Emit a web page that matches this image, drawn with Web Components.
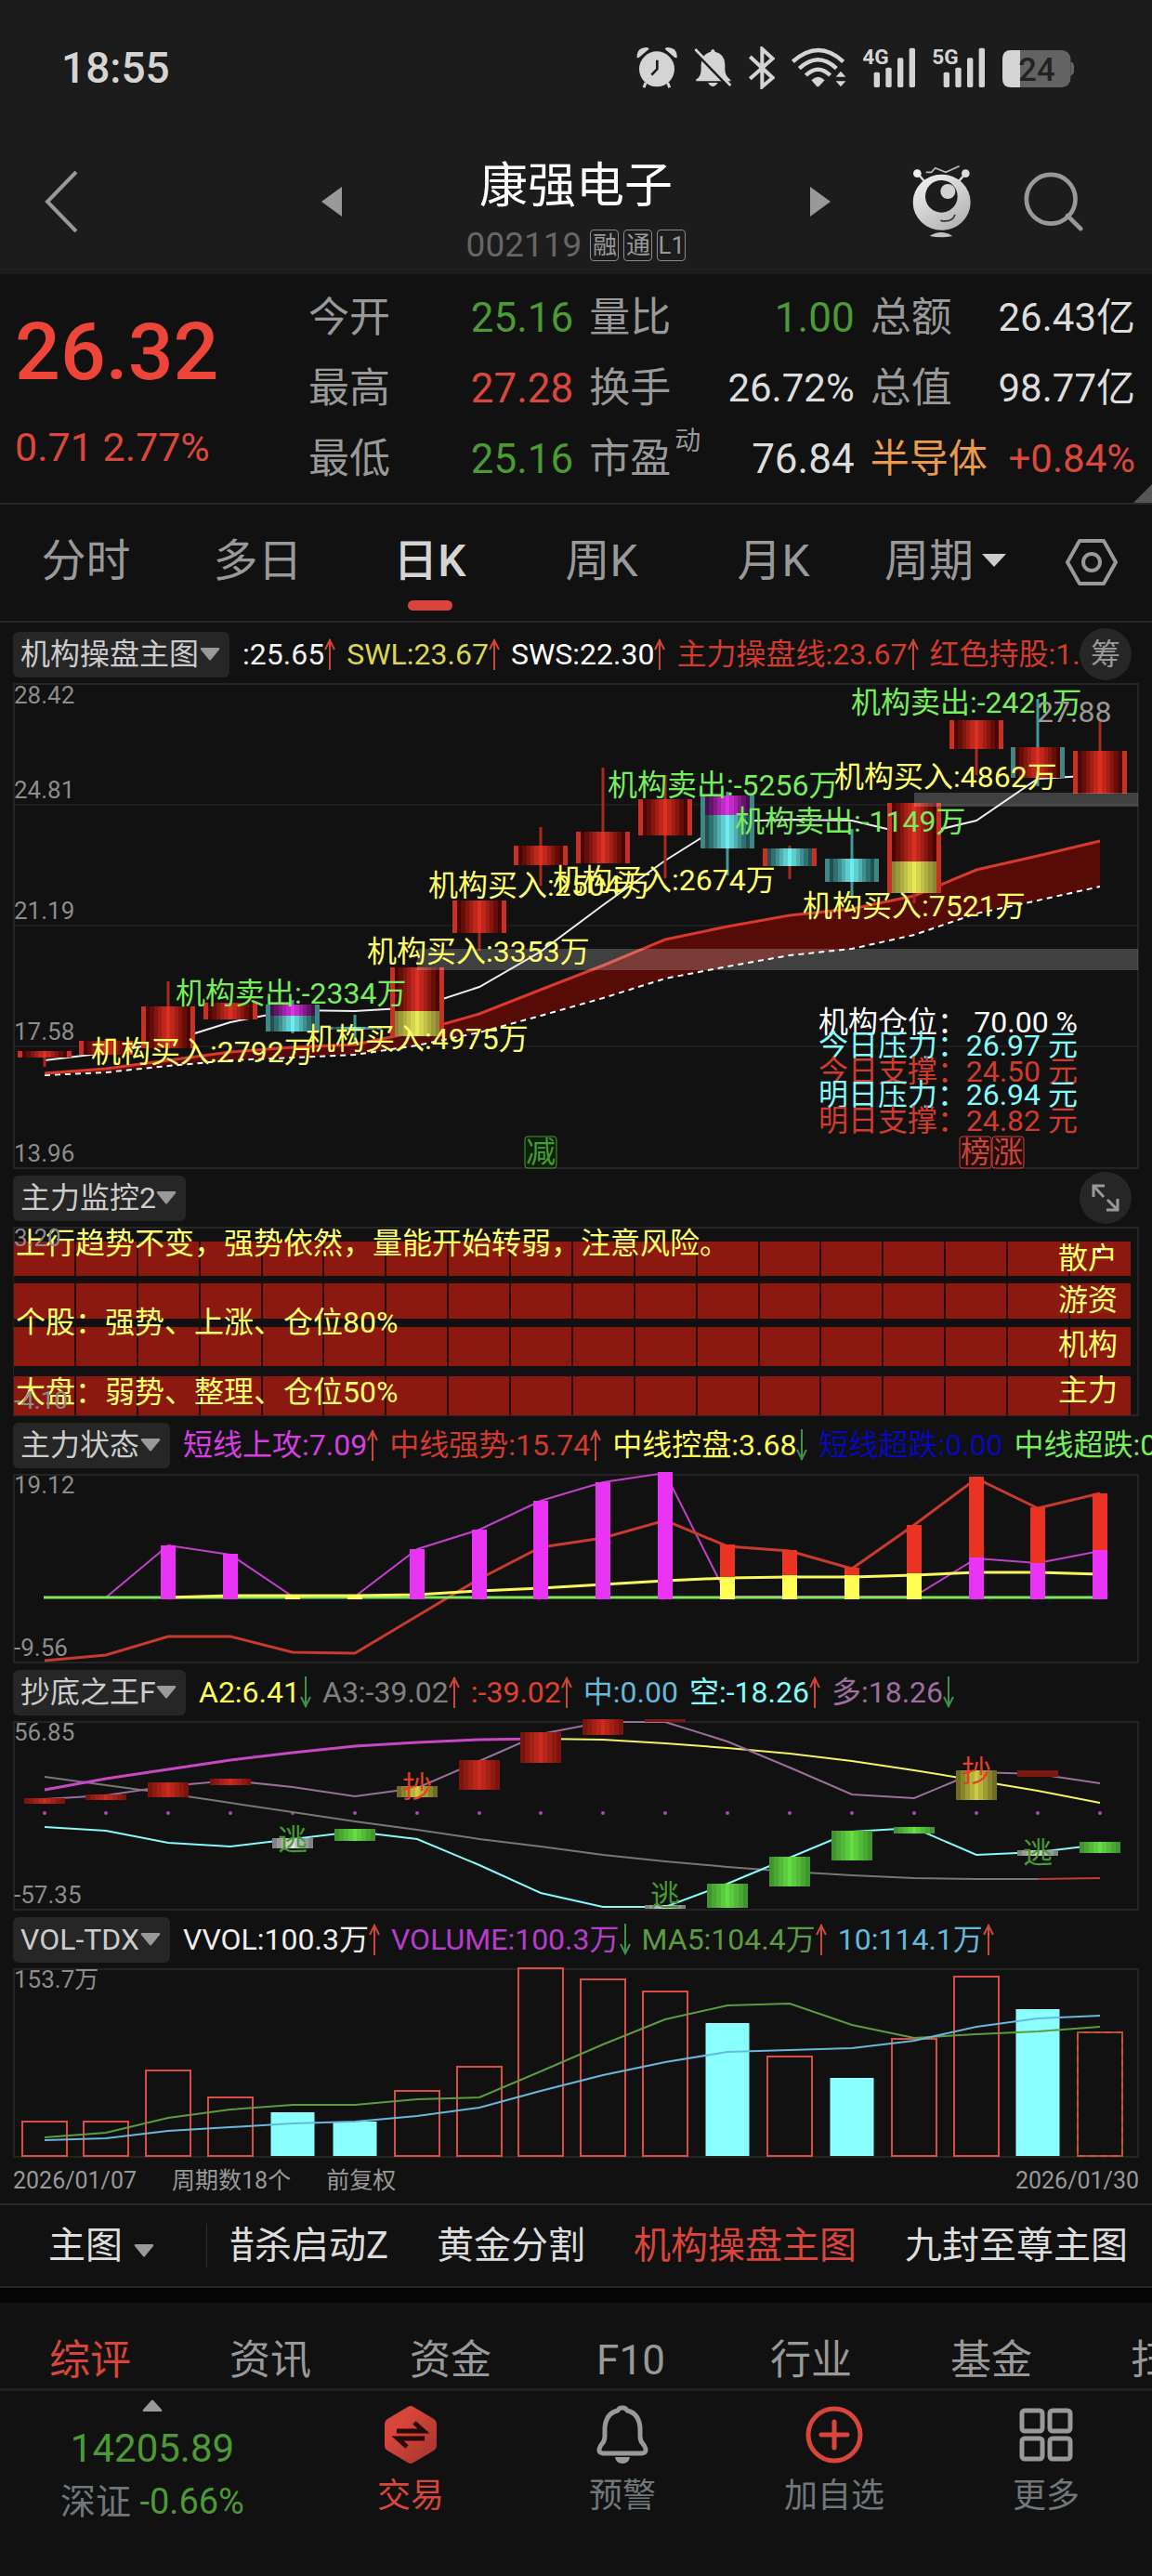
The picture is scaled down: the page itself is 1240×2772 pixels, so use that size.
<!DOCTYPE html>
<html lang="zh-CN">
<head>
<meta charset="utf-8">
<meta name="viewport" content="width=device-width, initial-scale=1">
<title>康强电子 002119</title>
<style>
  body {
    margin: 0;
    background: #111;
    color: #ddd;
    font-family: Roboto, "Noto Sans CJK SC", sans-serif;
    overflow-x: hidden;
  }
  .charts {
    padding-top: 3px;
  }
</style>
</head>
<body>
<status-bar time="18:55"></status-bar>
<stock-header name="康强电子" code="002119"></stock-header>
<quote-board></quote-board>
<period-tabs></period-tabs>

<main class="charts">
  <indicator-panel name="机构操盘主图">
    <trend-value color="#f2f2f2" dir="up">:25.65</trend-value>
    <trend-value color="#d8d850" dir="up">SWL:23.67</trend-value>
    <trend-value color="#ffffff" dir="up">SWS:22.30</trend-value>
    <trend-value color="#d23a2b" dir="up">主力操盘线:23.67</trend-value>
    <trend-value color="#d23a2b">红色持股:1.</trend-value>
    <round-button slot="action" label="筹码分布">筹</round-button>
    <price-chart slot="chart"></price-chart>
  </indicator-panel>

  <indicator-panel name="主力监控2">
    <round-button slot="action" label="展开">
      <svg width="30" height="30" viewBox="0 0 30 30" fill="none" stroke="#999" stroke-width="3"><path d="M2 14V2h12M2 2l11 12M28 16v12H16M28 28L17 17"/></svg>
    </round-button>
    <monitor-chart slot="chart"></monitor-chart>
  </indicator-panel>

  <indicator-panel name="主力状态">
    <trend-value color="#d63ee0" dir="up">短线上攻:7.09</trend-value>
    <trend-value color="#d23a2b" dir="up">中线强势:15.74</trend-value>
    <trend-value color="#ffff54" dir="down">中线控盘:3.68</trend-value>
    <trend-value color="#0808b8">短线超跌:0.00</trend-value>
    <trend-value color="#76ee5c">中线超跌:0.00</trend-value>
    <state-chart slot="chart"></state-chart>
  </indicator-panel>

  <indicator-panel name="抄底之王F">
    <trend-value color="#ffff54" dir="down">A2:6.41</trend-value>
    <trend-value color="#808080" dir="up">A3:-39.02</trend-value>
    <trend-value color="#e0402f" dir="up">:-39.02</trend-value>
    <trend-value color="#66b8dc">中:0.00</trend-value>
    <trend-value color="#84fbfb" dir="up">空:-18.26</trend-value>
    <trend-value color="#9c6f9f" dir="down">多:18.26</trend-value>
    <bottom-chart slot="chart"></bottom-chart>
  </indicator-panel>

  <indicator-panel name="VOL-TDX">
    <trend-value color="#eeeeee" dir="up">VVOL:100.3万</trend-value>
    <trend-value color="#b83ccb" dir="down">VOLUME:100.3万</trend-value>
    <trend-value color="#5d9b40" dir="up">MA5:104.4万</trend-value>
    <trend-value color="#66b8dc" dir="up">10:114.1万</trend-value>
    <volume-chart slot="chart"></volume-chart>
  </indicator-panel>
</main>

<chart-footer></chart-footer>
<formula-bar></formula-bar>
<info-tabs></info-tabs>
<bottom-nav></bottom-nav>

<script>
const CARET = `<svg class="caret" width="22" height="14" viewBox="0 0 22 14"><path d="M2 0h18q2 0 1 2L12 13q-1 1-2 0L1 2q-1-2 1-2z" fill="#999"/></svg>`;

const RESET = `
  button, select {
    margin: 0;
    padding: 0;
    border: 0;
    background: none;
    color: inherit;
    font: inherit;
    appearance: none;
    cursor: pointer;
  }
  a { color: inherit; text-decoration: none; }
  svg { display: block; }
`;

class BaseElement extends HTMLElement {
  constructor() {
    super();
    this.attachShadow({ mode: "open" });
  }

  connectedCallback() {
    this.shadowRoot.innerHTML = `<style>${RESET}${this.styles()}</style>${this.markup()}`;
  }

  styles() {
    return "";
  }
}

class StatusBar extends BaseElement {
  styles() {
    return `
      :host {
        display: flex;
        align-items: center;
        height: 146px;
        padding: 0 84px 0 66px;
        background: #1c1c1c;
        color: #d4d4d4;
      }
      time { flex: 1; font-size: 46px; font-weight: 500; }
      .icons { display: flex; gap: 18px; }
      svg { height: 46px; fill: #d4d4d4; }
    `;
  }

  signal(name) {
    return `
      <svg width="57" viewBox="774 33 171 138">
        <text x="772" y="91" font-size="68" font-weight="700">${name}</text>
        <rect x="809" y="116" width="19" height="49" rx="5"/>
        <rect x="847" y="101" width="19" height="64" rx="5"/>
        <rect x="885" y="70" width="19" height="95" rx="5"/>
        <rect x="923" y="38" width="19" height="127" rx="5"/>
      </svg>`;
  }

  markup() {
    return `
      <time>${this.getAttribute("time")}</time>
      <div class="icons">
        <svg width="44" viewBox="50 33 132 138">
          <path d="M52 70q-2-34 32-34q8 2 6 6L58 69zM181 70q2-34-32-34q-8 2-6 6l31 27z"/>
          <path d="M80 150l-6 16M151 150l6 16" stroke="#d4d4d4" stroke-width="9"/>
          <circle cx="116" cy="106" r="57"/>
          <path d="M117 77v29l-18 19" fill="none" stroke="#1c1c1c" stroke-width="8"/>
        </svg>
        <svg width="41" viewBox="236 33 123 138">
          <path d="M243 145v-6q16-8 16-32V90q1-32 31-40q1-8 7-8q6 0 7 8q32 8 32 40v17q0 20 17 33l2 5zM281 150h32q-16 24-32 0z"/>
          <path d="M233 44l115 118" stroke="#1c1c1c" stroke-width="10"/>
          <path d="M240 42l114 117" stroke="#d4d4d4" stroke-width="8"/>
        </svg>
        <svg width="28" viewBox="408 33 84 138">
          <path d="M412 66l73 68l-34 29V41l34 31l-73 65" fill="none" stroke="#d4d4d4" stroke-width="12"/>
        </svg>
        <svg width="59" viewBox="549 33 177 138">
          <g fill="none" stroke="#d4d4d4" stroke-width="13">
            <path d="M553 82q83-74 163 0M574 104q61-56 120 0M595 126q40-38 79 0"/>
          </g>
          <path d="M613 142q22-22 43 0l-18 19q-4 4-8 0zM692 131l16-18l16 18zM692 145l16 18l16-18z"/>
        </svg>
        ${this.signal("4G")}
        ${this.signal("5G")}
        <svg width="77" viewBox="1227 33 231 138">
          <rect x="1227" y="45" width="220" height="120" rx="28" fill="#636363"/>
          <path d="M1447 82q11 4 11 14v18q0 10-11 14z" fill="#636363"/>
          <path d="M1284 45h-29q-28 0-28 28v64q0 28 28 28h29z"/>
          <text x="1279" y="144" font-size="104" font-weight="500" fill="#222">24</text>
        </svg>
      </div>`;
  }
}

class StockHeader extends BaseElement {
  styles() {
    return `
      :host {
        display: grid;
        grid-template-columns: 1fr 548px 1fr;
        align-items: center;
        height: 141px;
        padding-bottom: 8px;
        background: #1c1c1c;
      }
      .back { padding-left: 48px; }
      .center { display: flex; justify-content: space-between; align-items: center; }
      .title { padding-top: 16px; text-align: center; }
      h1 { margin: 0 0 14px; color: #fff; font-size: 52px; font-weight: 400; line-height: 64px; }
      p { display: flex; gap: 5px; margin: 0; color: #666; font-size: 37px; line-height: 34px; }
      p b { margin-right: 4px; font-weight: 400; }
      p span {
        box-sizing: border-box;
        width: 31px;
        height: 34px;
        border: 1px solid #8a8a8a;
        border-radius: 4px;
        color: #999;
        font-size: 26px;
        line-height: 32px;
        display: flex;
        justify-content: center;
      }
      .tools { display: flex; justify-content: flex-end; align-items: center; gap: 54px; padding-right: 74px; }
    `;
  }

  markup() {
    return `
      <button class="back" aria-label="返回">
        <svg width="36" height="66" viewBox="0 0 36 66" fill="none" stroke="#999" stroke-width="4"><path d="M34 1L3 33l31 32"/></svg>
      </button>
      <div class="center">
        <button aria-label="上一只"><svg width="22" height="32" viewBox="0 0 22 32"><path d="M22 0v32L0 16z" fill="#999"/></svg></button>
        <div class="title">
          <h1>${this.getAttribute("name")}</h1>
          <p><b>${this.getAttribute("code")}</b><span>融</span><span>通</span><span>L1</span></p>
        </div>
        <button aria-label="下一只"><svg width="22" height="32" viewBox="0 0 22 32"><path d="M0 0v32l22-16z" fill="#999"/></svg></button>
      </div>
      <div class="tools">
        <button aria-label="助手">
          <svg width="68" height="80" viewBox="60 50 204 240">
            <defs><linearGradient id="skin" x1="0" y1="0" x2=".7" y2="1"><stop offset="0" stop-color="#f4f4f4"/><stop offset="1" stop-color="#b4b4b4"/></linearGradient></defs>
            <path d="M110 75h18l12-14l34 14l44-20" fill="none" stroke="#bbb" stroke-width="5"/>
            <path d="M84 80l24 28M237 80l-24 28" stroke="#ddd" stroke-width="7"/>
            <circle cx="82" cy="79" r="13" fill="#eee"/>
            <circle cx="238" cy="79" r="13" fill="#ddd"/>
            <ellipse cx="161" cy="172" rx="93" ry="90" fill="url(#skin)"/>
            <circle cx="160" cy="153" r="52" fill="#1c1c1c"/>
            <circle cx="181" cy="137" r="24" fill="#d2d2d2"/>
            <path d="M157 231q37 8 47-19" fill="none" stroke="#333" stroke-width="5"/>
            <path d="M122 281q38-24 74 0q-37 8-74 0z" fill="#c4c4c4"/>
          </svg>
        </button>
        <button aria-label="搜索">
          <svg width="64" height="64" viewBox="0 0 68 68" fill="none" stroke="#999" stroke-width="5"><circle cx="31" cy="31" r="28"/><path d="M50 50l15 15" stroke-linecap="round"/></svg>
        </button>
      </div>`;
  }
}

class QuoteBoard extends BaseElement {
  styles() {
    return `
      :host {
        position: relative;
        display: grid;
        grid-template-columns: 299px 1fr 1fr 1fr;
        column-gap: 17px;
        padding: 9px 18px 9px 16px;
        border-bottom: 2px solid #262626;
        white-space: nowrap;
      }
      .price { padding-top: 25px; color: #ee4539; }
      .price strong { display: block; font-size: 86px; font-weight: 500; line-height: 100px; }
      .price span { display: block; margin-top: 27px; color: #dc473c; font-size: 43px; line-height: 50px; }
      dl { margin: 0; }
      dl div { display: flex; justify-content: space-between; height: 76px; line-height: 76px; }
      dt { display: flex; color: #999; font-size: 44px; }
      dd { margin: 0; color: #ddd; font-size: 44px; }
      .small { font-size: 42px; }
      .hot { color: #ea9a48; }
      .up { color: #dc473c; }
      .down { color: #4b9a34; }
      sup { margin-left: 4px; font-size: 28px; line-height: 38px; }
      .corner { position: absolute; right: 0; bottom: 0; }
    `;
  }

  column(rows) {
    return `<dl>${rows.map(([label, value, cls = "", labelCls = ""]) =>
      `<div><dt class="${labelCls}">${label}</dt><dd class="${cls}">${value}</dd></div>`).join("")}</dl>`;
  }

  markup() {
    return `
      <div class="price"><strong>26.32</strong><span>0.71 2.77%</span></div>
      ${this.column([["今开", "25.16", "down"], ["最高", "27.28", "up"], ["最低", "25.16", "down"]])}
      ${this.column([["量比", "1.00", "down"], ["换手", "26.72%", "small"], ["市盈<sup>动</sup>", "76.84"]])}
      ${this.column([["总额", "26.43亿", "small"], ["总值", "98.77亿", "small"], ["半导体", "+0.84%", "small up", "small hot"]])}
      <svg class="corner" width="20" height="20"><path d="M20 0v20H0z" fill="#555"/></svg>`;
  }
}

class PeriodTabs extends BaseElement {
  styles() {
    return `
      :host {
        display: grid;
        grid-template-columns: repeat(6, 185fr) 130fr;
        height: 125px;
        border-bottom: 2px solid #262626;
        color: #999;
        font-size: 48px;
      }
      button, label { display: flex; flex-direction: column; align-items: center; padding-top: 24px; line-height: 74px; }
      button::after { content: ""; width: 48px; height: 11px; margin-top: 5px; border-radius: 6px; }
      button[aria-selected="true"] { color: #d4d4d4; font-weight: 500; }
      button[aria-selected="true"]::after { background: #d9453a; }
      label { flex-direction: row; align-items: flex-start; justify-content: center; gap: 8px; }
      select { height: 74px; line-height: 74px; }
      label svg { margin-top: 29px; }
      .gear { align-items: center; padding-top: 37px; }
      .gear::after { display: none; }
    `;
  }

  markup() {
    const tabs = ["分时", "多日", "日K", "周K", "月K"];
    return `
      ${tabs.map(t => `<button role="tab" aria-selected="${t === "日K"}">${t}</button>`).join("")}
      <label><select aria-label="周期"><option>周期</option></select>
        <svg width="26" height="14"><path d="M0 0h26L13 14z" fill="#ccc"/></svg></label>
      <button class="gear" aria-label="设置">
        <svg width="56" height="50" viewBox="0 0 56 50" fill="none" stroke="#999" stroke-width="4" stroke-linejoin="round"><path d="M15 2h26l13 23l-13 23H15L2 25z"/><circle cx="28" cy="25" r="9"/></svg>
      </button>`;
  }
}

class TrendValue extends BaseElement {
  styles() {
    return `
      :host { display: flex; flex: none; align-items: center; color: ${this.getAttribute("color")}; }
    `;
  }

  markup() {
    const dir = this.getAttribute("dir");
    const arrow = {
      up: `<svg width="12" height="34" fill="none" stroke="#cf4638" stroke-width="2"><path d="M6 34V1M1 12L6 2l5 10"/></svg>`,
      down: `<svg width="12" height="34" fill="none" stroke="#3f9148" stroke-width="2"><path d="M6 0v33M1 22l5 10l5-10"/></svg>`
    };
    return `<slot></slot>${arrow[dir] || ""}`;
  }
}

class RoundButton extends BaseElement {
  styles() {
    return `
      :host { display: block; }
      button {
        display: grid;
        place-items: center;
        width: 56px;
        height: 56px;
        border-radius: 50%;
        background: #262626;
        color: #999;
        font-size: 32px;
        line-height: 32px;
      }
    `;
  }

  markup() {
    return `<button aria-label="${this.getAttribute("label")}"><slot></slot></button>`;
  }
}

class IndicatorPanel extends BaseElement {
  styles() {
    return `
      :host { display: block; padding: 3px 0 0 14px; }
      header { display: flex; align-items: center; height: 56px; margin-bottom: 3px; font-size: 32px; }
      label {
        display: flex;
        flex: none;
        align-items: center;
        height: 49px;
        padding: 0 10px 0 8px;
        border-radius: 6px;
        background: #262626;
        color: #ccc;
      }
      select { line-height: 48px; }
      .legend { display: flex; flex: 1; gap: 12px; min-width: 0; padding-left: 14px; overflow: hidden; white-space: nowrap; line-height: 48px; }
      ::slotted([slot="action"]) { margin-right: 22px; }
      ::slotted([slot="chart"]) { margin-right: 14px; }
    `;
  }

  markup() {
    const name = this.getAttribute("name");
    return `
      <header>
        <label><select aria-label="指标"><option>${name}</option></select>${CARET}</label>
        <div class="legend"><slot></slot></div>
        <slot name="action"></slot>
      </header>
      <slot name="chart"></slot>`;
  }
}

// x of the n-th trading day, 18 days per screen
const dayX = i => Math.round(33.5 + 66.87 * i);

class ChartBase extends BaseElement {
  styles() {
    return `
      :host { display: block; }
      svg { width: 100%; height: auto; overflow: visible; }
      .axis { fill: #8c8c8c; font-size: 26px; }
      .note { font-size: 32px; }
      .buy { fill: #ffff6a; }
      .sell { fill: #76ee5c; }
      .line { fill: none; stroke-width: 2; }
    `;
  }

  // banded gradient, dark at both sides and bright in the middle
  bands(id, dark, bright, steps = 6) {
    const n = steps * 2 - 1;
    let stops = "";
    for (let i = 0; i < n; i++) {
      const t = (i < steps ? i : n - 1 - i) / (steps - 1);
      const c = dark.map((d, k) => Math.round(d + (bright[k] - d) * t));
      const color = `rgb(${c.join(",")})`;
      stops += `<stop offset="${i / n}" stop-color="${color}"/><stop offset="${(i + 1) / n}" stop-color="${color}"/>`;
    }
    return `<linearGradient id="${id}">${stops}</linearGradient>`;
  }

  points(values, from = 0) {
    return values.map((y, i) => `${dayX(i + from)},${y}`).join(" ");
  }

  line(values, color, from = 0, extra = "") {
    return `<polyline class="line" points="${this.points(values, from)}" stroke="${color}" ${extra}/>`;
  }

  bar(i, top, bottom, width, fill) {
    return `<rect x="${dayX(i) - width / 2}" y="${top}" width="${width}" height="${bottom - top}" fill="${fill}"/>`;
  }

  text(x, y, str, cls, extra = "") {
    return `<text x="${x}" y="${y}" class="${cls}" ${extra}>${str}</text>`;
  }

  frame(height, grid, body) {
    return `
      <svg viewBox="0 0 1212 ${height}">
        <rect x="1" y="1" width="1210" height="${height - 2}" fill="none" stroke="#242424" stroke-width="2"/>
        ${grid.map(y => `<path d="M0 ${y}H1212" stroke="#2b2b2b" stroke-width="1"/>`).join("")}
        ${body}
      </svg>`;
  }
}

class PriceChart extends ChartBase {
  // body: [top, bottom, wick top, wick bottom, side colour, fill, split y, split fill]
  get candles() {
    return [
      [396, 403, 396, 413, "r", "red"],
      [385, 400, 383, 400, "r", "red"],
      [348, 393, 321, 393, "r", "red"],
      [344, 362, 344, 362, "r", "red"],
      [346, 375, 341, 377, "c", "magenta", 358, "cyan"],
      [370, 373, 357, 388, "c", "cyan"],
      [306, 380, 306, 380, "r", "red", 353, "yellow"],
      [234, 269, 234, 288, "r", "red"],
      [175, 196, 155, 218, "r", "red"],
      [160, 194, 91, 194, "r", "red"],
      [125, 164, 99, 210, "r", "red"],
      [121, 178, 117, 207, "c", "magenta", 142, "cyan"],
      [178, 197, 175, 211, "r", "cyan"],
      [189, 214, 157, 232, "c", "cyan"],
      [129, 226, 129, 237, "r", "red", 192, "yellow"],
      [40, 71, 40, 99, "r", "red"],
      [69, 102, 17, 111, "c", "red"],
      [73, 119, 38, 119, "r", "red"]
    ];
  }

  candle([top, bottom, high, low, side, fill, split, fill2], i) {
    const edge = side === "r" ? "#c93024" : "#3f8787";
    const wick = side === "r" ? "#a8281e" : "#3f9a9a";
    const mid = split || bottom;
    return `
      <path d="M${dayX(i)} ${high}V${low}" stroke="${wick}" stroke-width="3"/>
      ${this.bar(i, top, bottom, 58, edge)}
      ${this.bar(i, top, mid, 48, `url(#${fill})`)}
      ${split ? this.bar(i, mid, bottom, 48, `url(#${fill2})`) : ""}`;
  }

  tag(x, str, color, bg) {
    return `<rect x="${x}" y="488" width="34" height="34" rx="3" fill="${bg}" stroke="${color}"/>
      ${this.text(x + 17, 516, str, "note", `fill="${color}" text-anchor="middle"`)}`;
  }

  markup() {
    const trend = [420, 415, 406, 397, 392, 389, 375, 356, 330, 304, 276, 262, 250, 243, 229, 201, 186, 170];
    const base = [422, 419, 412, 406, 403, 400, 390, 376, 358, 339, 318, 305, 293, 286, 271, 248, 234, 219];
    const avg = [406, 398, 386, 365, 352, 353, 349, 327, 289, 239, 191, 149, 147, 148, 164, 148, 103, 99];
    const area = this.points(trend) + " " + this.points(base).split(" ").reverse().join(" ");
    const notes = [
      [175, 345, "机构卖出:-2334万", "sell"],
      [84, 408, "机构买入:2792万", "buy"],
      [315, 394, "机构买入:4975万", "buy"],
      [381, 300, "机构买入:3353万", "buy"],
      [447, 229, "机构买入:2504万", "buy"],
      [581, 223, "机构买入:2674万", "buy"],
      [640, 121, "机构卖出:-5256万", "sell"],
      [777, 160, "机构卖出:-1149万", "sell"],
      [884, 112, "机构买入:4862万", "buy"],
      [850, 251, "机构买入:7521万", "buy"],
      [902, 32, "机构卖出:-2421万", "sell"]
    ];
    const levels = [
      [376, "机构仓位：", "70.00 %", "#fff"],
      [401, "今日压力：", "26.97 元", "#84fbfb"],
      [429, "今日支撑：", "24.50 元", "#d23a2b"],
      [454, "明日压力：", "26.94 元", "#84fbfb"],
      [482, "明日支撑：", "24.82 元", "#d23a2b"]
    ];
    return this.frame(523, [131, 261, 391], `
      <defs>
        ${this.bands("red", [72, 4, 0], [219, 48, 34])}
        ${this.bands("cyan", [34, 80, 80], [110, 238, 238])}
        ${this.bands("magenta", [70, 14, 74], [222, 50, 232])}
        ${this.bands("yellow", [138, 134, 52], [232, 232, 84])}
      </defs>
      <polygon points="${area}" fill="#570b06"/>
      ${this.line(base, "#fff", 0, 'stroke-dasharray="6 5"')}
      ${this.line(trend, "#d8392b", 0, 'style="stroke-width:3"')}
      ${this.line(avg, "#eee")}
      ${this.candles.map((c, i) => this.candle(c, i)).join("")}
      <rect x="435" y="286" width="776" height="23" fill="#fff" fill-opacity=".2"/>
      <rect x="970" y="118" width="241" height="15" fill="#fff" fill-opacity=".2"/>
      ${notes.map(([x, y, s, cls]) => this.text(x, y, s, `note ${cls}`)).join("")}
      ${levels.map(([y, label, value, color]) =>
        this.text(867, y, label, "note", `fill="${color}"`) +
        this.text(1146, y, value, "note", `fill="${color}" text-anchor="end"`)).join("")}
      ${this.text(1102, 42, "27.88", "note", 'fill="#999"')}
      ${this.tag(551, "减", "#479a33", "#0c200a")}
      ${this.tag(1019, "榜", "#c8453a", "#240c0a")}
      ${this.tag(1054, "涨", "#c8453a", "#240c0a")}
      ${[[22, "28.42"], [124, "24.81"], [254, "21.19"], [384, "17.58"], [515, "13.96"]]
        .map(([y, s]) => this.text(1, y, s, "axis")).join("")}
    `);
  }
}

class MonitorChart extends ChartBase {
  markup() {
    const rows = [[16, 53], [61, 99], [108, 150], [161, 203]];
    let cells = rows.map(([a, b]) => `<rect x="1" y="${a}" width="1202" height="${b - a}" fill="#8b1910"/>`).join("");
    for (let i = 0; i < 17; i++) {
      cells += `<path d="M${dayX(i + .5)} 16V203" stroke="#2a0c0a" stroke-width="2"/>`;
    }
    const gaps = [[53, 61], [99, 108], [150, 161]]
      .map(([a, b]) => `<rect x="1" y="${a}" width="1202" height="${b - a}" fill="#111"/>`).join("");
    return this.frame(204, [], `
      ${cells}${gaps}
      ${this.text(3, 29, "上行趋势不变，强势依然，量能开始转弱，注意风险。", "note buy")}
      ${this.text(3, 114, "个股：强势、上涨、仓位80%", "note buy")}
      ${this.text(3, 189, "大盘：弱势、整理、仓位50%", "note buy")}
      ${[[45, "散户"], [90, "游资"], [138, "机构"], [187, "主力"]].map(([y, s]) => this.text(1125, y, s, "note buy")).join("")}
      <rect x="1167" y="24" width="4" height="4" fill="#fff"/>
      ${this.text(1, 21, "3.20", "axis")}
      ${this.text(1, 196, "-4.10", "axis")}
    `);
  }
}

class StateChart extends ChartBase {
  markup() {
    const magenta = "#ea34f5", red = "#ea3323", yellow = "#ffff54";
    const bars = [
      [2, 77, magenta], [3, 86, magenta], [4, 130, yellow], [5, 130, yellow],
      [6, 81, magenta], [7, 60, magenta], [8, 29, magenta], [9, 9, magenta], [10, -2, magenta],
      [11, 76, red], [12, 82, red], [13, 101, red], [14, 55, red], [15, 3, red], [16, 36, red], [17, 21, red],
      [11, 111, yellow], [12, 109, yellow], [13, 109, yellow], [14, 107, yellow],
      [15, 90, magenta], [16, 96, magenta], [17, 82, magenta]
    ];
    return this.frame(204, [], `
      ${this.line([133, 77, 87, 132, 132, 81, 60, 29, 9, -1, 132, 132, 132, 132, 91, 96, 83], "#c040cc", 1)}
      ${this.line([201, 195, 175, 175, 192, 193, 153, 113, 79, 69, 50, 78, 83, 102, 55, 5, 37, 21], "#c93a2c", 0, 'style="stroke-width:3"')}
      <path d="M33 133H1170" stroke="#7ee858" stroke-width="3"/>
      ${this.line([133, 131, 131, 131, 130, 126, 123, 119, 115, 112, 111, 111, 109, 106, 106, 108], "#f8f85a", 2, 'style="stroke-width:3"')}
      ${bars.map(([i, top, color]) => this.bar(i, top, 135, 16, color)).join("")}
      ${this.text(1, 21, "19.12", "axis")}
      ${this.text(1, 196, "-9.56", "axis")}
    `);
  }
}

class BottomChart extends ChartBase {
  markup() {
    const bars = [
      [0, 83, 89, "red"], [1, 79, 85, "red"], [2, 66, 82, "red"], [3, 62, 69, "red"],
      [4, 126, 137, "grey"], [5, 116, 129, "green"], [6, 70, 82, "yellow"], [7, 42, 74, "red"],
      [8, 12, 45, "red"], [9, -2, 15, "red"], [10, 198, 202, "grey"], [11, 175, 201, "green"],
      [12, 146, 178, "green"], [13, 118, 150, "green"], [14, 114, 121, "green"],
      [15, 53, 85, "yellow"], [16, 139, 145, "grey"], [17, 130, 142, "green"]
    ];
    let dots = "";
    for (let i = 0; i < 18; i++) dots += `<circle cx="${dayX(i)}" cy="99" r="2" fill="#b440c0"/>`;
    const mark = (i, y, s, color) => this.text(dayX(i), y, s, "note", `fill="${color}" text-anchor="middle"`);
    return this.frame(204, [], `
      <defs>
        ${this.bands("red", [122, 20, 12], [204, 44, 32], 5)}
        ${this.bands("green", [64, 150, 44], [100, 222, 68], 5)}
        ${this.bands("yellow", [112, 108, 36], [204, 204, 68], 5)}
        ${this.bands("grey", [130, 130, 130], [225, 225, 225], 5)}
      </defs>
      ${dots}
      ${this.line([60, 69, 78, 88, 98, 108, 117, 127, 135, 144, 151, 157, 162, 166, 169, 170, 170], "#777")}
      ${this.line([170, 169], "#c83a30", 16)}
      ${this.line([114, 118, 131, 135, 127, 119, 127, 155, 185, 200, 200, 175, 147, 119, 115, 144, 141, 133], "#84fbfb")}
      ${this.line([74, 62, 52, 42, 34, 27, 23, 20, 19], "#c848c4", 0, 'style="stroke-width:3"')}
      ${this.line([19, 20, 24, 29, 35, 43, 53, 64, 75, 88], "#f4f45c", 8)}
      ${this.line([84, 80, 70, 64, 71, 81, 72, 43, 14, 1, 1, 22, 50, 79, 83, 55, 57, 67], "#9a6f9c")}
      ${this.bar(10, -2, 1, 44, "#7e170e")}
      ${this.bar(16, 53, 60, 44, "#7e170e")}
      ${bars.map(([i, a, b, c]) => this.bar(i, a, b, 44, `url(#${c})`)).join("")}
      ${mark(6, 82, "抄", "#e63f28")}
      ${mark(15, 65, "抄", "#e63f28")}
      ${mark(4, 139, "逃", "#479a33")}
      ${mark(10, 199, "逃", "#479a33")}
      ${mark(16, 153, "逃", "#479a33")}
      ${this.text(1, 21, "56.85", "axis")}
      ${this.text(1, 196, "-57.35", "axis")}
    `);
  }
}

class VolumeChart extends ChartBase {
  markup() {
    const volumes = [165, 165, 110, 139, 155, 165, 132, 106, 0, 12, 25, 59, 95, 118, 76, 9, 44, 69];
    const falling = [4, 5, 11, 13, 16];
    const bars = volumes.map((top, i) => {
      if (falling.includes(i)) return this.bar(i, top, 202, 47, "#8affff");
      const rect = (color, dash) => `<rect x="${dayX(i) - 24}" y="${top}" width="48" height="${202 - top}" fill="none" stroke="${color}" stroke-width="2" ${dash}/>`;
      // the last day is still trading
      return rect("#dc4c42", "") + (i === 17 ? rect("#9a5a34", 'stroke-dasharray="6 6"') : "");
    }).join("");
    return this.frame(204, [], `
      ${bars}
      ${this.line([182, 177, 161, 152, 147, 147, 141, 139, 111, 82, 55, 40, 38, 61, 75, 71, 68, 63], "#5d9b40")}
      ${this.line([185, 183, 175, 171, 167, 165, 159, 150, 132, 115, 101, 90, 88, 86, 78, 63, 54, 51], "#66b8dc")}
      ${this.text(1, 21, "153.7万", "axis")}
    `);
  }
}

class ChartFooter extends BaseElement {
  styles() {
    return `
      :host {
        display: flex;
        gap: 38px;
        align-items: center;
        height: 49px;
        padding: 0 14px;
        border-bottom: 2px solid #262626;
        color: #999;
        font-size: 25px;
        line-height: 49px;
      }
      time:last-child { margin-left: auto; }
    `;
  }

  markup() {
    return `<time>2026/01/07</time><span>周期数18个</span><span>前复权</span><time>2026/01/30</time>`;
  }
}

class FormulaBar extends BaseElement {
  styles() {
    return `
      :host {
        display: flex;
        align-items: center;
        height: 87px;
        border-bottom: 2px solid #262626;
        background: #111;
        color: #ddd;
        font-size: 40px;
        white-space: nowrap;
      }
      label { display: flex; flex: none; align-items: center; gap: 12px; box-sizing: border-box; width: 223px; height: 47px; padding-left: 52px; border-right: 1px solid #2c2c2c; }
      label svg { margin-top: 10px; }
      nav { display: flex; flex: 1; justify-content: flex-end; gap: 52px; min-width: 0; margin-left: 25px; padding-right: 26px; overflow: hidden; }
      nav button { flex: none; line-height: 62px; }
      .active { color: #d9453a; }
    `;
  }

  markup() {
    return `
      <label><select aria-label="主图"><option>主图</option></select>${CARET}</label>
      <nav>
        <button>惜杀启动Z</button>
        <button>黄金分割</button>
        <button class="active">机构操盘主图</button>
        <button>九封至尊主图</button>
      </nav>`;
  }
}

class InfoTabs extends BaseElement {
  styles() {
    return `
      :host {
        display: flex;
        height: 92px;
        border-top: 16px solid #060606;
        border-bottom: 3px solid #1f1f1f;
        color: #999;
        font-size: 44px;
        overflow: hidden;
      }
      a { flex: none; width: 194px; padding-top: 30px; line-height: 64px; text-align: center; }
      .active { color: #d9453a; }
    `;
  }

  markup() {
    return ["综评", "资讯", "资金", "F10", "行业", "基金", "扫雷"]
      .map((t, i) => `<a href="#" class="${i ? "" : "active"}">${t}</a>`).join("");
  }
}

class BottomNav extends BaseElement {
  styles() {
    return `
      :host {
        display: grid;
        grid-template-columns: 328fr repeat(4, 228fr);
        height: 199px;
        color: #6f777b;
        font-size: 36px;
      }
      a { display: flex; flex-direction: column; align-items: center; }
      .index { padding-top: 9px; font-size: 38px; }
      .index strong { margin: 15px 0 4px; font-size: 42px; font-weight: 400; line-height: 50px; }
      .index span { line-height: 56px; }
      .down, .index strong { color: #4b9a34; }
      .item { padding-top: 15px; line-height: 48px; }
      .item svg { margin-bottom: 10px; }
      .trade { color: #d9453a; }
    `;
  }

  item(label, icon, cls = "") {
    return `<a href="#" class="item ${cls}"><svg width="64" height="64" viewBox="0 0 64 64" fill="none" stroke-width="5">${icon}</svg>${label}</a>`;
  }

  markup() {
    return `
      <a href="#" class="index">
        <svg width="22" height="13" viewBox="0 0 22 13"><path d="M10 1q1-1 2 0l9 10q1 2-1 2H2q-2 0-1-2z" fill="#999"/></svg>
        <strong>14205.89</strong>
        <span>深证 <span class="down">-0.66%</span></span>
      </a>
      ${this.item("交易", `
        <defs><linearGradient id="hex" x1="0" y1="0" x2="1" y2="1"><stop offset=".3" stop-color="#d9453a"/><stop offset="1" stop-color="#a0342c"/></linearGradient></defs>
        <path d="M29 2q3-2 6 0l22 13q3 2 3 5v24q0 3-3 5L35 62q-3 2-6 0L7 49q-3-2-3-5V20q0-3 3-5z" fill="url(#hex)"/>
        <path d="M17 28h29L36 19M47 36H18l10 9" stroke="#260a08" stroke-width="5"/>`, "trade")}
      ${this.item("预警", `
        <path d="M32 3q-4 0-5 3Q14 9 13 25v9q0 5-4 9q-5 8 2 9h42q7-1 2-9q-4-4-4-9v-9Q50 9 37 6q-1-3-5-3z" stroke="#999" stroke-linejoin="round"/>
        <path d="M24 56h16q-1 7-8 7t-8-7z" fill="#999"/>`)}
      ${this.item("加自选", `
        <circle cx="32" cy="32" r="28" stroke="#d9453a"/>
        <path d="M32 18v28M18 32h28" stroke="#d9453a" stroke-linecap="round"/>`)}
      ${this.item("更多", `
        <g stroke="#999"><rect x="6" y="6" width="22" height="22" rx="3"/><rect x="36" y="6" width="22" height="22" rx="3"/><rect x="6" y="36" width="22" height="22" rx="3"/><rect x="36" y="36" width="22" height="22" rx="3"/></g>`)}`;
  }
}

customElements.define("status-bar", StatusBar);
customElements.define("stock-header", StockHeader);
customElements.define("quote-board", QuoteBoard);
customElements.define("period-tabs", PeriodTabs);
customElements.define("trend-value", TrendValue);
customElements.define("round-button", RoundButton);
customElements.define("indicator-panel", IndicatorPanel);
customElements.define("price-chart", PriceChart);
customElements.define("monitor-chart", MonitorChart);
customElements.define("state-chart", StateChart);
customElements.define("bottom-chart", BottomChart);
customElements.define("volume-chart", VolumeChart);
customElements.define("chart-footer", ChartFooter);
customElements.define("formula-bar", FormulaBar);
customElements.define("info-tabs", InfoTabs);
customElements.define("bottom-nav", BottomNav);
</script>
</body>
</html>
